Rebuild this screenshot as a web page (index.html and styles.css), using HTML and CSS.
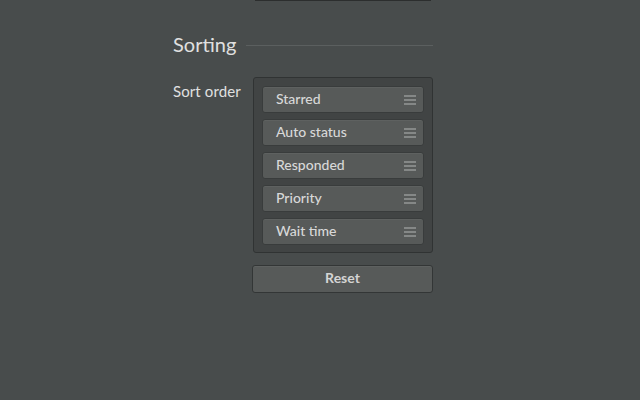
FILE: index.html
```html
<!DOCTYPE html>
<html>
<head>
<meta charset="utf-8">
<link rel="stylesheet" href="styles.css">
</head>
<body>
<div class="page">
  <div class="prev-field"></div>
  <div class="section-head">
    <h2 class="section-title">Sorting</h2>
    <div class="section-rule"></div>
  </div>
  <div class="form-row">
    <div class="form-label">Sort order</div>
    <div class="form-control">
      <ul class="sort-list">
        <li class="sort-item"><span>Starred</span><span class="handle"><i></i><i></i><i></i></span></li>
        <li class="sort-item"><span>Auto status</span><span class="handle"><i></i><i></i><i></i></span></li>
        <li class="sort-item"><span>Responded</span><span class="handle"><i></i><i></i><i></i></span></li>
        <li class="sort-item"><span>Priority</span><span class="handle"><i></i><i></i><i></i></span></li>
        <li class="sort-item"><span>Wait time</span><span class="handle"><i></i><i></i><i></i></span></li>
      </ul>
      <button class="btn-reset">Reset</button>
    </div>
  </div>
</div>
</body>
</html>
```
FILE: styles.css
```css
html, body {
  margin: 0;
  padding: 0;
  background: #484c4c;
  height: 100%;
}
body {
  font-family: Lato, "Open Sans", sans-serif;
  color: #dcdcdc;
}
.page {
  width: 260px;
  margin-left: 173px;
}
.prev-field {
  margin-left: 82px;
  width: 176px;
  height: 1px;
  background: #2c2e2e;
}
.section-head {
  display: flex;
  align-items: center;
  margin-top: 31px;
  gap: 10px;
}
.section-title {
  margin: 0;
  font-weight: normal;
  font-size: 20px;
  line-height: 24px;
  color: #e0e0e0;
}
.section-rule {
  flex: 1;
  height: 1px;
  background: #5b5f5f;
  margin-top: 2px;
}
.form-row {
  display: flex;
  margin-top: 21px;
}
.form-label {
  width: 80px;
  font-size: 15px;
  line-height: 18px;
  padding-top: 5px;
  color: #e0e0e0;
  letter-spacing: 0.1px;
}
.form-control {
  width: 181px;
  margin-left: -1px;
}
.sort-list {
  list-style: none;
  margin: 0 0 0 1px;
  padding: 8px 8px 7px 8px;
  background: #414444;
  border: 1px solid #303333;
  border-radius: 3px;
  display: flex;
  flex-direction: column;
  gap: 6px;
}
.sort-item {
  height: 25px;
  box-sizing: content-box;
  display: flex;
  align-items: center;
  justify-content: space-between;
  padding: 0 7px 0 13px;
  background: #575a59;
  border: 1px solid #393c3c;
  border-radius: 3px;
  box-shadow: inset 0 1px 0 #5e6160;
  font-size: 14px;
  font-weight: 500;
  color: #d8d8d8;
}
.sort-item span:first-child {
  margin-bottom: 3px;
}
.handle {
  display: flex;
  flex-direction: column;
  gap: 2px;
  width: 12px;
}
.handle i {
  display: block;
  height: 2px;
  background: #858887;
}
.btn-reset {
  display: block;
  width: 181px;
  height: 28px;
  margin-top: 12px;
  background: #575a59;
  border: 1px solid #333636;
  border-radius: 3px;
  box-shadow: inset 0 1px 0 #5e6160;
  font-family: Lato, "Open Sans", sans-serif;
  font-size: 14px;
  font-weight: bold;
  color: #d4d4d4;
  padding: 0 0 3px 0;
}
```
